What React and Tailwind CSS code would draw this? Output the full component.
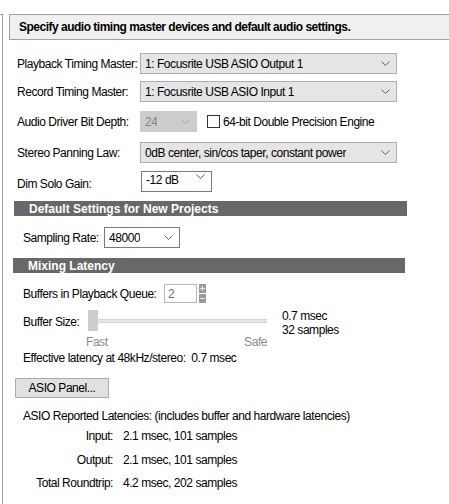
import React from "react";

const Chevron = ({ color = "#606060" }) => (
  <svg width="9" height="5" viewBox="0 0 9 5" className="shrink-0">
    <path d="M0.5 0.5 L4.5 4.5 L8.5 0.5" fill="none" stroke={color} strokeWidth="1" />
  </svg>
);

const Select = ({ value, width, white, disabled, className = "" }) => (
  <div
    className={
      "flex items-center justify-between h-[21px] pl-[4px] pr-[6px] border " +
      (white
        ? "bg-white border-[#7a7a7a] "
        : disabled
        ? "bg-[#cccccc] border-[#cccccc] text-[#838383] "
        : "bg-[#e5e5e5] border-[#adadad] ") +
      className
    }
    style={{ width }}
  >
    <span className="truncate">{value}</span>
    <Chevron color={disabled ? "#a8a8a8" : "#606060"} />
  </div>
);

const SectionBar = ({ title, className = "" }) => (
  <div className={"h-[15px] bg-[#686868] flex items-center pl-[15px] text-white font-bold tracking-[0px] " + className}>
    {title}
  </div>
);

export default function App() {
  return (
    <div
      className="w-[449px] h-[504px] bg-white flex overflow-hidden text-[12px] tracking-[-0.45px] leading-none text-[#000] whitespace-nowrap"
      style={{ fontFamily: '"Liberation Sans", Arial, sans-serif' }}
    >
      <div className="w-[4px] shrink-0 h-full flex flex-col">
        <div className="mt-[14px] h-full border-t border-r border-[#a0a0a0] w-[3px]" />
      </div>
      <div className="flex-1 flex flex-col">
        <div className="mt-[14px] ml-[5px] h-[26px] bg-[#f0f0f0] border-y border-l border-[#a0a0a0] flex items-center pl-[9px] font-bold tracking-[-0.5px]">
          Specify audio timing master devices and default audio settings.
        </div>

        <div className="pl-[13px] flex flex-col">
          <div className="mt-[13px] flex items-center">
            <div className="w-[123px]">Playback Timing Master:</div>
            <Select value="1: Focusrite USB ASIO Output 1" width={257} />
          </div>
          <div className="mt-[7px] flex items-center">
            <div className="w-[123px]">Record Timing Master:</div>
            <Select value="1: Focusrite USB ASIO Input 1" width={257} />
          </div>
          <div className="mt-[9px] flex items-center">
            <div className="w-[123px]">Audio Driver Bit Depth:</div>
            <Select value="24" width={57} disabled />
            <div className="ml-[10px] w-[13px] h-[13px] border border-[#333] bg-white" />
            <div className="ml-[3px]">64-bit Double Precision Engine</div>
          </div>
          <div className="mt-[10px] flex items-center">
            <div className="w-[123px]">Stereo Panning Law:</div>
            <Select value="0dB center, sin/cos taper, constant power" width={257} />
          </div>
          <div className="mt-[8px] flex items-end">
            <div className="w-[124px] pb-[2px]">Dim Solo Gain:</div>
            <Select value="-12 dB" width={71} white className="pl-[1px] items-start pt-[2px]" />
          </div>
        </div>

        <SectionBar title="Default Settings for New Projects" className="mt-[9px] ml-[10px] w-[393px]" />

        <div className="mt-[11px] pl-[19px] flex items-center">
          <div className="w-[81px]">Sampling Rate:</div>
          <Select value="48000" width={76} white className="pl-[2px]" />
        </div>

        <SectionBar title="Mixing Latency" className="mt-[10px] ml-[9px] w-[392px]" />

        <div className="pl-[19px] flex flex-col">
          <div className="mt-[11px] flex items-center">
            <div className="w-[141px]">Buffers in Playback Queue:</div>
            <div className="w-[33px] h-[19px] border border-[#b8b8b8] flex items-center pl-[3px] text-[#6d6d6d]">2</div>
            <div className="ml-[2px] flex flex-col gap-[1px]">
              <div className="w-[7px] h-[9px] bg-[#9a9a9a] flex items-center justify-center">
                <div className="relative w-[5px] h-[5px]">
                  <div className="absolute left-0 top-[2px] w-[5px] h-[1px] bg-[#e8e8e8]" />
                  <div className="absolute left-[2px] top-0 w-[1px] h-[5px] bg-[#e8e8e8]" />
                </div>
              </div>
              <div className="w-[7px] h-[9px] bg-[#9a9a9a] flex items-center justify-center">
                <div className="w-[5px] h-[1px] bg-[#e8e8e8]" />
              </div>
            </div>
          </div>

          <div className="mt-[7px] flex items-start">
            <div className="w-[65px] pt-[6px]">Buffer Size:</div>
            <div className="flex flex-col w-[180px]">
              <div className="flex items-center h-[21px]">
                <div className="w-[10px] h-[21px] bg-[#cdcdcd]" />
                <div className="w-[169px] h-[4px] bg-[#e6e6e6] border-y border-[#d4d4d4]" />
              </div>
              <div className="mt-[5px] flex justify-between text-[#8a8a8a] pr-[1px]">
                <span className="-ml-[2px]">Fast</span>
                <span>Safe</span>
              </div>
            </div>
            <div className="ml-[14px] flex flex-col gap-[2px]">
              <span>0.7 msec</span>
              <span>32 samples</span>
            </div>
          </div>

          <div className="mt-[4px]">Effective latency at 48kHz/stereo:&nbsp;&nbsp;0.7 msec</div>
        </div>

        <div className="mt-[14px] ml-[11px] w-[94px] h-[20px] bg-[#e1e1e1] border border-[#adadad] flex items-center justify-center">
          ASIO Panel...
        </div>

        <div className="pl-[19px] flex flex-col">
          <div className="mt-[12px]">ASIO Reported Latencies: (includes buffer and hardware latencies)</div>
          <div className="mt-[8px] flex">
            <div className="w-[90px] text-right">Input:</div>
            <div className="ml-[10px]">2.1 msec, 101 samples</div>
          </div>
          <div className="mt-[12px] flex">
            <div className="w-[90px] text-right">Output:</div>
            <div className="ml-[10px]">2.1 msec, 101 samples</div>
          </div>
          <div className="mt-[11px] flex">
            <div className="w-[90px] text-right">Total Roundtrip:</div>
            <div className="ml-[10px]">4.2 msec, 202 samples</div>
          </div>
        </div>
      </div>
    </div>
  );
}
